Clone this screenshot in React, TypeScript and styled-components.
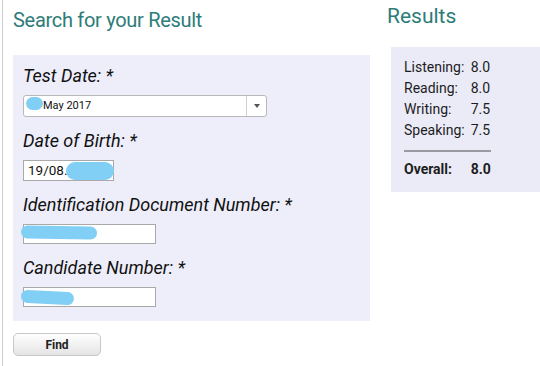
import React, { FC } from 'react';
import styled, { createGlobalStyle } from 'styled-components';

const GlobalStyle = createGlobalStyle`
  html, body {
    margin: 0;
    padding: 0;
    background: #ffffff;
  }
  body {
    font-family: Roboto, 'Liberation Sans', sans-serif;
    color: #111;
  }
`;

const Page = styled.div`
  display: flex;
  width: 540px;
  height: 366px;
  overflow: hidden;
`;

const SearchColumn = styled.section`
  width: 357px;
  margin-left: 2px;
  padding-left: 10px;
  border-left: 1px solid #cfcfcf;
  flex-shrink: 0;
`;

const Title = styled.h1`
  margin: 7px 0 0;
  font-size: 20px;
  letter-spacing: -0.3px;
  line-height: 26px;
  font-weight: 400;
  color: #2d7c79;
`;

const FormPanel = styled.div`
  margin-top: 22px;
  padding: 10px 0 14px 10px;
  background: #eeeefa;
  display: flex;
  flex-direction: column;
  gap: 13px;
`;

const Field = styled.div`
  display: flex;
  flex-direction: column;
  align-items: flex-start;
`;

const Label = styled.label`
  font-size: 18px;
  line-height: 22px;
  font-style: italic;
  color: #111;
  margin-bottom: 8px;
`;

const SelectBox = styled.div`
  position: relative;
  display: flex;
  width: 244px;
  height: 22px;
  box-sizing: border-box;
  background: #fff;
  border: 1px solid #b8b8b8;
  border-radius: 3px;
`;

const SelectText = styled.span`
  flex: 1;
  padding-left: 19px;
  font-size: 11px;
  line-height: 20px;
  color: #111;
`;

const SelectArrow = styled.span`
  width: 19px;
  border-left: 1px solid #d0d0d0;
  display: flex;
  align-items: center;
  justify-content: center;
  &::after {
    content: '';
    border-left: 3px solid transparent;
    border-right: 3px solid transparent;
    border-top: 4px solid #555;
  }
`;

const TextBox = styled.div<{ $width: number; $height: number }>`
  position: relative;
  width: ${(p) => p.$width}px;
  height: ${(p) => p.$height}px;
  box-sizing: border-box;
  background: #fff;
  border: 1px solid #a9a9a9;
  font-size: 13.5px;
  line-height: ${(p) => p.$height - 2}px;
  padding-left: 4px;
  color: #111;
`;

const Scribble = styled.span<{ $left: number; $top: number; $w: number; $h: number; $rot?: number }>`
  position: absolute;
  left: ${(p) => p.$left}px;
  top: ${(p) => p.$top}px;
  width: ${(p) => p.$w}px;
  height: ${(p) => p.$h}px;
  border-radius: ${(p) => p.$h / 2}px;
  background: #82cff6;
  transform: rotate(${(p) => p.$rot ?? 0}deg);
`;

const FindButton = styled.button`
  margin-top: 12px;
  width: 88px;
  height: 23px;
  border: 1px solid #c8c8c8;
  border-radius: 5px;
  background: linear-gradient(#ffffff, #e4e4e4);
  font-family: Roboto, 'Liberation Sans', sans-serif;
  font-size: 12px;
  font-weight: 700;
  color: #222;
  padding: 0;
`;

const ResultsColumn = styled.section`
  flex: 1;
  margin-left: 17px;
`;

const ResultsTitle = styled.h2`
  margin: 4px 0 0;
  font-size: 21px;
  line-height: 24px;
  font-weight: 400;
  color: #2d7c79;
`;

const ResultsPanel = styled.div`
  margin: 19px 0 0 4px;
  padding: 10px 0 12px 13px;
  background: #ebebf7;
`;

const ScoreGrid = styled.div`
  display: inline-grid;
  grid-template-columns: max-content max-content;
  column-gap: 6px;
  font-size: 14px;
  line-height: 21px;
  color: #1d1d1d;
`;

const Divider = styled.div`
  grid-column: 1 / -1;
  height: 2px;
  background: #9a9aa2;
  margin: 9px 0 7px;
`;

const Cell = styled.span<{ $bold?: boolean }>`
  font-weight: ${(p) => (p.$bold ? 700 : 400)};
`;

const scores = [
  { label: 'Listening:', value: '8.0' },
  { label: 'Reading:', value: '8.0' },
  { label: 'Writing:', value: '7.5' },
  { label: 'Speaking:', value: '7.5' },
];

const App: FC = () => {
  return (
    <>
      <GlobalStyle />
      <Page>
        <SearchColumn>
          <Title>Search for your Result</Title>
          <FormPanel>
            <Field>
              <Label>Test Date: *</Label>
              <SelectBox>
                <SelectText>May 2017</SelectText>
                <SelectArrow />
                <Scribble $left={2} $top={1} $w={17} $h={13} />
              </SelectBox>
            </Field>
            <Field>
              <Label>Date of Birth: *</Label>
              <TextBox $width={91} $height={21}>
                19/08.
                <Scribble $left={42} $top={1} $w={48} $h={18} />
              </TextBox>
            </Field>
            <Field>
              <Label>Identification Document Number: *</Label>
              <TextBox $width={133} $height={20}>
                <Scribble $left={-3} $top={1} $w={76} $h={13} $rot={1} />
              </TextBox>
            </Field>
            <Field>
              <Label>Candidate Number: *</Label>
              <TextBox $width={133} $height={20}>
                <Scribble $left={-3} $top={3} $w={53} $h={13} $rot={3} />
              </TextBox>
            </Field>
          </FormPanel>
          <FindButton>Find</FindButton>
        </SearchColumn>
        <ResultsColumn>
          <ResultsTitle>Results</ResultsTitle>
          <ResultsPanel>
            <ScoreGrid>
              {scores.map((s) => (
                <React.Fragment key={s.label}>
                  <Cell>{s.label}</Cell>
                  <Cell>{s.value}</Cell>
                </React.Fragment>
              ))}
              <Divider />
              <Cell $bold>Overall:</Cell>
              <Cell $bold>8.0</Cell>
            </ScoreGrid>
          </ResultsPanel>
        </ResultsColumn>
      </Page>
    </>
  );
};

export default App;
